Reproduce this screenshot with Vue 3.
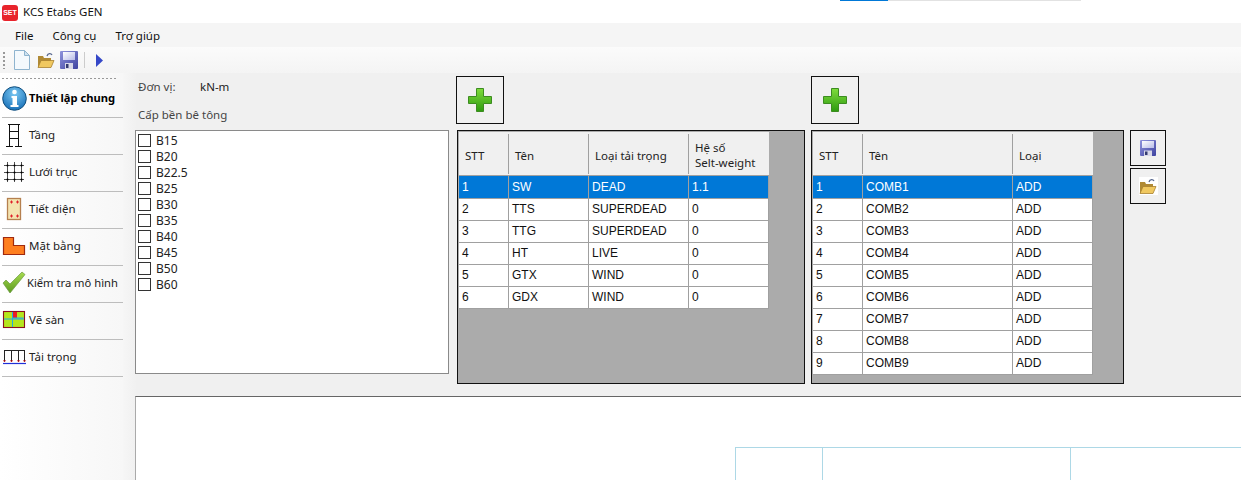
<script setup>
const grades = ['B15','B20','B22.5','B25','B30','B35','B40','B45','B50','B60']
const loads = [
  ['1','SW','DEAD','1.1'],['2','TTS','SUPERDEAD','0'],['3','TTG','SUPERDEAD','0'],
  ['4','HT','LIVE','0'],['5','GTX','WIND','0'],['6','GDX','WIND','0']
]
const combos = Array.from({length:9},(_,i)=>[String(i+1),'COMB'+(i+1),'ADD'])
const nav = [
  {t:'Tầng',k:'floor'},{t:'Lưới trục',k:'grid'},{t:'Tiết diện',k:'section'},{t:'Mặt bằng',k:'plan'},
  {t:'Kiểm tra mô hình',k:'check'},{t:'Vẽ sàn',k:'slab'},{t:'Tải trọng',k:'load'}
]
</script>

<template>
  <div class="app">
    <div class="progress"><i></i></div>
    <header class="title">
      <span class="logo">SET</span>
      <span>KCS Etabs GEN</span>
    </header>
    <nav class="menu">
      <span>File</span><span>Công cụ</span><span>Trợ giúp</span>
    </nav>
    <div class="toolbar">
      <i class="grip"></i>
      <svg class="tb" width="18" height="20" viewBox="0 0 18 20"><path d="M1.500.5h10l5 5v14h-15z" fill="#f4f9fd" stroke="#8fb4cf"/><path d="M11.500.5v5h5z" fill="#cfe2f0" stroke="#8fb4cf"/></svg>
      <svg class="tb t2" width="18" height="17" viewBox="0 0 18 17"><path d="M1 15V4h5l1 2h7v9z" fill="#b08a35"/><path d="M1 15.500l3-7h13l-3 7z" fill="#f0c860" stroke="#a88230" stroke-width=".8"/><path d="M10 4c1-3 4-3 5-1" fill="none" stroke="#5a6a90" stroke-width="1.300"/></svg>
      <svg class="tb t3" width="18" height="18" viewBox="0 0 18 18"><defs><linearGradient id="s1" x1="0" y1="0" x2="1" y2="1"><stop offset="0" stop-color="#8f93dc"/><stop offset="1" stop-color="#3e43a0"/></linearGradient><linearGradient id="s2" x1="0" y1="0" x2="1" y2="1"><stop offset="0" stop-color="#fff"/><stop offset="1" stop-color="#b8bce8"/></linearGradient></defs><rect width="18" height="18" rx="1" fill="url(#s1)"/><rect x="3" y="1" width="12" height="8" fill="url(#s2)"/><rect x="5" y="12" width="8" height="6" fill="#d8d8e8"/><rect x="6" y="13" width="2.500" height="4" fill="#333a70"/></svg>
      <i class="sep"></i>
      <svg class="play" width="7" height="13" viewBox="0 0 7 13"><path d="M0 0l7 6.500L0 13z" fill="#3548c8"/></svg>
    </div>

    <div class="body">
      <aside class="side">
        <div class="dots"></div>
        <div class="nav first">
          <svg width="25" height="25" viewBox="0 0 25 25"><defs><radialGradient id="g1" cx=".5" cy=".3" r=".8"><stop offset="0" stop-color="#7cc8f2"/><stop offset="1" stop-color="#0a64b0"/></radialGradient></defs><circle cx="12.500" cy="12.500" r="11.800" fill="url(#g1)" stroke="#12507f"/><circle cx="12.500" cy="6" r="2.300" fill="#fff"/><path d="M9.500 10h5.500v9h1.500v2h-8v-2h2v-7h-1z" fill="#fff"/></svg>
          <b>Thiết lập chung</b>
        </div>
        <div v-for="n in nav" :key="n.k" class="nav" :class="'n-' + n.k">
          <span class="ico">
            <svg v-if="n.k==='floor'" width="24" height="26" viewBox="0 0 24 26"><path d="M7.500 2v22M16.500 2v22M6 2.500h12M7.500 9.500h9M7.500 16.500h9M4 24.500h7M13 24.500h7" fill="none" stroke="#111"/></svg>
            <svg v-else-if="n.k==='grid'" width="22" height="22" viewBox="0 0 22 22"><path d="M4.500 1v20M11.500 1v20M18.500 1v20M1 4.500h20M1 11.500h20M1 18.500h20" stroke="#222" stroke-width=".8" fill="none"/><g fill="#000"><circle cx="4.500" cy="4.500" r="1"/><circle cx="11.500" cy="4.500" r="1"/><circle cx="18.500" cy="4.500" r="1"/><circle cx="4.500" cy="11.500" r="1"/><circle cx="11.500" cy="11.500" r="1"/><circle cx="18.500" cy="11.500" r="1"/><circle cx="4.500" cy="18.500" r="1"/><circle cx="11.500" cy="18.500" r="1"/><circle cx="18.500" cy="18.500" r="1"/></g></svg>
            <svg v-else-if="n.k==='section'" width="24" height="24" viewBox="0 0 24 24"><rect x="5.500" y="1.500" width="13" height="21" fill="#f4e3b0" stroke="#b5804f" stroke-width="1.300"/><path d="M8 5h3M9.500 3.500v3M14 5h3M15.500 3.500v3M8 19h3M9.500 17.500v3M14 19h3M15.500 17.500v3" stroke="#e0202a"/></svg>
            <svg v-else-if="n.k==='plan'" width="24" height="24" viewBox="0 0 24 24"><path d="M1.500 3.500h10v8h11v9h-21z" fill="#ff7f20" stroke="#a02a10" stroke-width="1.200"/></svg>
            <svg v-else-if="n.k==='check'" width="24" height="24" viewBox="0 0 24 24"><defs><linearGradient id="g2" x1="0" y1="0" x2="0" y2="1"><stop offset="0" stop-color="#a8dc50"/><stop offset="1" stop-color="#5c9a20"/></linearGradient></defs><path d="M1 12l3-3 4 4L20 1l3 2.500L8 22z" fill="url(#g2)" stroke="#6a9a40" stroke-width=".7"/></svg>
            <svg v-else-if="n.k==='slab'" width="24" height="24" viewBox="0 0 24 24"><rect x="1.500" y="3.500" width="21" height="16" fill="#b5e61d" stroke="#8a1020" stroke-width="1.100"/><rect x="11" y="4" width="4" height="6" fill="#ed1c24"/><path d="M10.500 4v15M2 11h20M10.500 10h11" stroke="#22a8e8" fill="none"/></svg>
            <svg v-else width="24" height="24" viewBox="0 0 24 24"><path d="M2 5.500h21M2.500 5v12M9.500 5v12M16.500 5v12M22.500 5v12" stroke="#222" fill="none"/><path d="M1.500 15l1 2 1-2M8.500 15l1 2 1-2M15.500 15l1 2 1-2M21.500 15l1 2 1-2" stroke="#e02020" fill="none" stroke-width=".8"/><path d="M1 18.500h23" stroke="#2030d8" stroke-width="1.200"/></svg>
          </span>
          <span class="lbl">{{ n.t }}</span>
        </div>
      </aside>

      <main class="content">
        <section class="top">
          <div class="left">
            <div class="unit"><span>Đơn vị:</span><span class="v">kN-m</span></div>
            <div class="grade">Cấp bền bê tông</div>
            <div class="checks">
              <label v-for="g in grades" :key="g"><i></i>{{ g }}</label>
            </div>
          </div>

          <div class="col c1">
            <button class="add"><svg width="26" height="26" viewBox="0 0 26 26"><defs><linearGradient id="g3" x1="0" y1="0" x2="0" y2="1"><stop offset="0" stop-color="#7fdc3c"/><stop offset="1" stop-color="#2e9a10"/></linearGradient></defs><path d="M9.500 1.500h7v8h8v7h-8v8h-7v-8h-8v-7h8z" fill="url(#g3)" stroke="#3c8c20"/></svg></button>
            <div class="grid">
              <div class="row head load">
                <div><span>STT</span></div><div><span>Tên</span></div><div><span>Loại tải trọng</span></div><div><span>Hệ số<br>Selt-weight</span></div>
              </div>
              <div v-for="(r,i) in loads" :key="r[0]" class="row load" :class="{sel:i===0}">
                <div v-for="c in r" :key="c">{{ c }}</div>
              </div>
            </div>
          </div>

          <div class="col c2">
            <button class="add"><svg width="26" height="26" viewBox="0 0 26 26"><path d="M9.500 1.500h7v8h8v7h-8v8h-7v-8h-8v-7h8z" fill="url(#g3)" stroke="#3c8c20"/></svg></button>
            <div class="grid">
              <div class="row head combo">
                <div><span>STT</span></div><div><span>Tên</span></div><div><span>Loại</span></div>
              </div>
              <div v-for="(r,i) in combos" :key="r[0]" class="row combo" :class="{sel:i===0}">
                <div v-for="c in r" :key="c">{{ c }}</div>
              </div>
            </div>
          </div>

          <div class="tools">
            <button><svg width="16" height="16" viewBox="0 0 16 16"><rect width="16" height="16" rx="1" fill="url(#s1)"/><rect x="2" y="1" width="12" height="7" fill="url(#s2)"/><rect x="4" y="10.500" width="8" height="5.500" fill="#d8d8e8"/><rect x="5" y="11.500" width="2.500" height="3.500" fill="#333a70"/></svg></button>
            <button><span class="paper"><svg width="18" height="16" viewBox="0 0 18 16"><path d="M1 15V4h5l1 2h7v9z" fill="#b08a35"/><path d="M1 15.500l3-7h13l-3 7z" fill="#f0c860" stroke="#a88230" stroke-width=".8"/><path d="M10 4c1-3 4-3 5-1" fill="none" stroke="#5a6a90" stroke-width="1.300"/></svg></span></button>
          </div>
        </section>

        <section class="bottom">
          <div class="sheet">
            <div class="s1"></div><div class="s2"></div><div class="s3"></div>
          </div>
        </section>
      </main>
    </div>
  </div>
</template>

<style>
html, body { margin: 0; background: #fff; overflow: hidden; }
</style>

<style scoped>
.app { position: relative; width: 1241px; height: 480px; overflow: hidden; font: 11.500px "Noto Sans", sans-serif; color: #111; background: #f0f0f0; display: flex; flex-direction: column; }
.progress { position: absolute; left: 840px; top: 0; width: 241px; height: 1px; background: #e2e2e2; }
.progress i { display: block; width: 48px; height: 1px; background: #0078d7; }
.title { height: 23px; background: #fff; display: flex; align-items: center; gap: 5px; padding-left: 2px; }
.logo { width: 16px; height: 16px; margin-top: 2px; border-radius: 3px; background: #e8242c; color: #fff; font: bold 7px/16px "Liberation Sans", sans-serif; text-align: center; }
.menu { height: 24px; background: #f5f5f5; display: flex; align-items: center; gap: 19px; padding-left: 15px; }
.toolbar { height: 26px; background: linear-gradient(#fbfbfb, #f4f4f4); display: flex; align-items: center; padding-left: 3px; }
.grip { width: 2px; height: 17px; background: repeating-linear-gradient(#999 0 2px, transparent 2px 4px); }
.tb { margin-left: 8px; }
.t2 { margin-left: 6px; }
.t3 { margin-left: 5px; }
.sep { width: 1px; height: 16px; background: #ccc; margin-left: 6px; }
.play { margin-left: 11px; }
.body { flex: 1; display: flex; min-height: 0; }
.side { width: 123px; flex: none; background: linear-gradient(90deg, #fff, #f7f7f7); padding-top: 5px; box-sizing: border-box; }
.dots { height: 1px; margin: 0 5px 0 2px; background: repeating-linear-gradient(90deg, #999 0 2px, transparent 2px 4px); }
.nav { height: 36px; border-bottom: 1px solid #bdbdbd; margin-left: 2px; display: flex; align-items: center; color: #222; white-space: nowrap; }
.nav .ico { width: 24px; margin-right: 3px; display: flex; justify-content: center; flex: none; margin-top: -2px; }
.nav .lbl { padding-bottom: 3px; }
.n-check .ico { margin-right: 1px; }
.n-check .lbl { font-size: 11.200px; }
.nav.first { height: 37px; margin-top: 1px; color: #000; gap: 2px; }
.nav.first b { font-weight: 700; font-size: 11.200px; padding-bottom: 2px; }
.content { flex: 1; min-width: 0; background: linear-gradient(90deg, #f6f6f6 0, #f0f0f0 14px); display: flex; flex-direction: column; }
.top { height: 323px; display: flex; padding-left: 12px; }
.left { width: 314px; margin-right: 8px; display: flex; flex-direction: column; color: #444; }
.unit { display: flex; height: 18px; margin-top: 4px; align-items: center; padding-left: 3px; }
.unit span:first-child { width: 62px; }
.unit .v { color: #222; }
.grade { height: 18px; margin-top: 10px; padding-left: 3px; display: flex; align-items: center; }
.checks { box-sizing: border-box; height: 244px; margin-top: 7px; background: #fff; border: 1px solid #8a8a8a; padding: 1px 0 0 2px; font: 12px "Noto Sans", sans-serif; color: #222; }
.checks label { height: 16px; display: flex; align-items: center; gap: 5px; }
.checks i { box-sizing: border-box; width: 13px; height: 13px; border: 1px solid #333; background: #fff; flex: none; }
.col { display: flex; flex-direction: column; padding-top: 3px; }
.c1 { width: 348px; margin-right: 6px; }
.c2 { width: 313px; margin-right: 6px; }
.add { box-sizing: border-box; width: 48px; height: 48px; border: 1px solid #111; background: #f0f0f0; padding: 0; display: flex; align-items: center; justify-content: center; margin-bottom: 6px; }
.c1 .add { margin-left: -1px; }
.grid { box-sizing: border-box; height: 254px; background: #ababab; border: 1px solid #111; padding: 1px; font: 12px "Liberation Sans", sans-serif; }
.row { display: grid; height: 22px; background: #fff; color: #111; }
.row > div { box-sizing: border-box; border-right: 1px solid #a0a0a0; border-bottom: 1px solid #a0a0a0; padding: 1px 0 0 3px; line-height: 21px; white-space: nowrap; }
.load { width: 310px; grid-template-columns: 50px 80px 100px 80px; }
.combo { width: 280px; grid-template-columns: 50px 150px 80px; }
.row.sel { background: #0078d7; color: #fff; }
.row.head { height: 44px; background: #f0f0f0; }
.row.head > div { border-right: 0; padding: 2px 0 0; }
.row.head > div > span { box-sizing: border-box; display: flex; align-items: center; height: 40px; padding: 2px 0 0 6px; line-height: 15px; border-right: 1px solid #a0a0a0; font-family: "Noto Sans", sans-serif; font-size: 11.500px; color: #222; }
.row.head > div:last-child > span { border-right: 0; }
.tools { display: flex; flex-direction: column; gap: 2px; padding-top: 57px; }
.tools button { box-sizing: border-box; width: 36px; height: 36px; border: 1px solid #111; background: #f0f0f0; padding: 0; display: flex; align-items: center; justify-content: center; }
.paper { width: 19px; height: 18px; background: #fff; display: flex; align-items: center; justify-content: center; }
.bottom { flex: 1; margin-left: 12px; background: #fff; border-top: 1px solid #666; border-left: 1px solid #aaa; padding: 50px 0 0 599px; min-height: 0; overflow: hidden; }
.sheet { display: flex; height: 40px; margin-right: -40px; border-top: 1px solid #add8e6; }
.sheet div { box-sizing: border-box; border-left: 1px solid #add8e6; }
.s1 { width: 87px; flex: none; }
.s2 { width: 248px; flex: none; }
.s3 { flex: 1; }
</style>
